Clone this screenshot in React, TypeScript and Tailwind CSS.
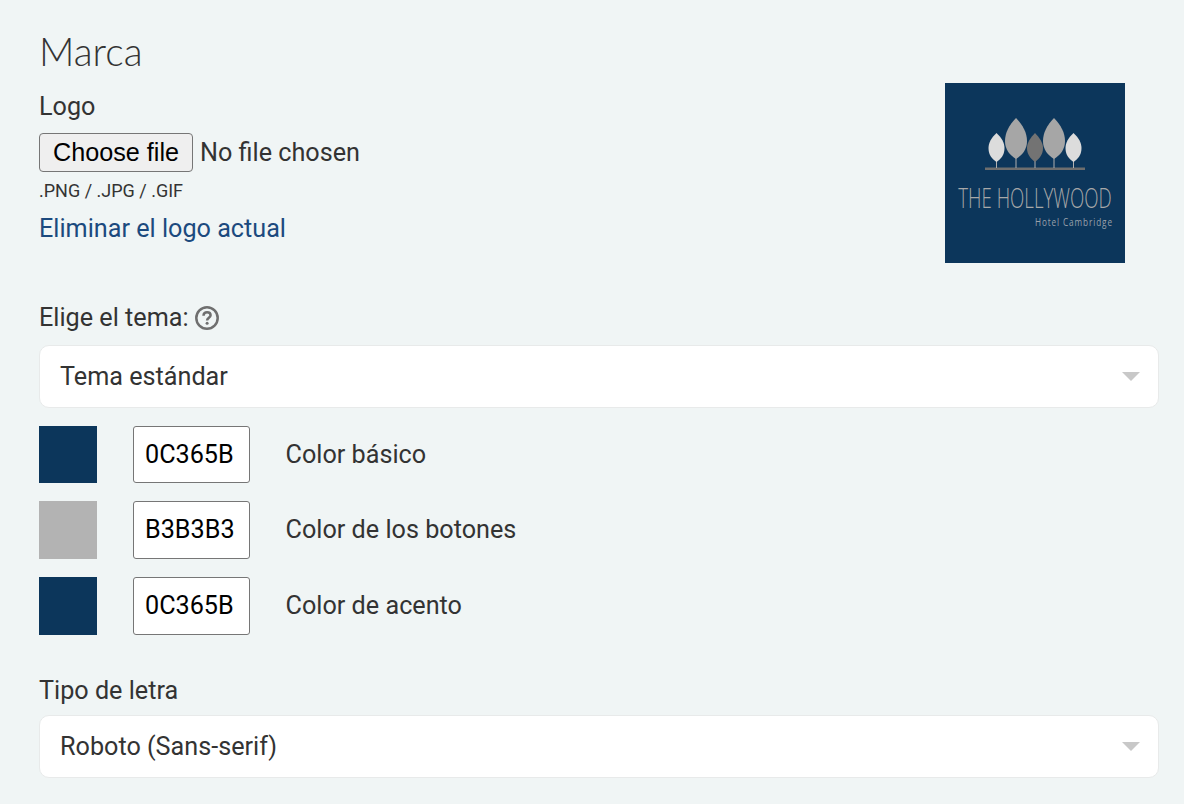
const roboto = "font-['Roboto',sans-serif]";

function LogoImage() {
  return (
    <svg width="180" height="180" viewBox="0 0 180 180" className="block shrink-0">
      <rect width="180" height="180" fill="#0c365b" />
      <rect x="40" y="84.5" width="100" height="2.5" fill="#6e6e6e" />
      <g stroke="#b0b0b0" strokeWidth="1">
        <line x1="51.5" y1="70" x2="51.5" y2="85" />
        <line x1="71" y1="70" x2="71" y2="85" />
        <line x1="90" y1="70" x2="90" y2="85" />
        <line x1="109" y1="70" x2="109" y2="85" />
        <line x1="128.5" y1="70" x2="128.5" y2="85" />
      </g>
      <path d="M51.5 50 C46 55 43.5 60 43.5 65 C43.5 72 47 76 51.5 79 C56 76 59.5 72 59.5 65 C59.5 60 57 55 51.5 50 Z" fill="#dcdcdc" />
      <path d="M71 35 C64 42 60 50 60 58 C60 67 65 72 71 76 C77 72 82 67 82 58 C82 50 78 42 71 35 Z" fill="#a6a6a6" />
      <path d="M90 50 C85 55 82 60 82 65 C82 71 85 75 90 79 C95 75 98 71 98 65 C98 60 95 55 90 50 Z" fill="#737373" />
      <path d="M109 35 C102 42 98 50 98 58 C98 67 103 72 109 76 C115 72 120 67 120 58 C120 50 116 42 109 35 Z" fill="#a6a6a6" />
      <path d="M128.5 50 C123 55 120.5 60 120.5 65 C120.5 72 124 76 128.5 79 C133 76 136.5 72 136.5 65 C136.5 60 134 55 128.5 50 Z" fill="#dcdcdc" />
      <text transform="scale(1 1.39)" x="13.3" y="89.6" fill="#a8a8a8" fontFamily="'Open Sans', sans-serif" fontWeight="300" fontSize="19.5" textLength="153.4" lengthAdjust="spacingAndGlyphs">THE HOLLYWOOD</text>
      <text transform="scale(1 1.3)" x="90" y="110" fill="#9aa1ab" fontFamily="'Open Sans', sans-serif" fontWeight="400" fontSize="8.2" textLength="77" lengthAdjust="spacing">Hotel Cambridge</text>
    </svg>
  );
}

function HelpIcon() {
  return (
    <svg width="24" height="24" viewBox="0 0 24 24" className="block" fill="none">
      <circle cx="12" cy="12" r="10.7" stroke="#6f6f6f" strokeWidth="2.5" />
      <path d="M8.5 9.7 C8.6 7.5 10.1 6.3 12.1 6.3 C14.2 6.3 15.6 7.6 15.6 9.3 C15.6 11.6 12.1 11.9 12.1 14.4" stroke="#6f6f6f" strokeWidth="2.5" />
      <circle cx="12.1" cy="17.3" r="1.5" fill="#6f6f6f" />
    </svg>
  );
}

function Select({ value }: { value: string }) {
  return (
    <div className="flex h-[63px] w-[1120px] items-center justify-between rounded-[10px] border border-[#e8eaea] bg-white pl-[20px] pr-[18px]">
      <span className="text-[25.2px] leading-none text-[#333333]">{value}</span>
      <span className="h-0 w-0 border-x-[9px] border-t-[9px] border-x-transparent border-t-[#c8c8c8]" />
    </div>
  );
}

function ColorRow({ hex, label, swatch }: { hex: string; label: string; swatch: string }) {
  return (
    <div className="mt-[18px] flex items-center">
      <div className={`h-[57.6px] w-[58px] ${swatch}`} />
      <div className="ml-[36px] flex h-[57.6px] w-[117px] items-center rounded-[3px] border border-[#767676] bg-white pl-[11px] text-[25.2px] text-black">
        {hex}
      </div>
      <span className="ml-[35.6px] text-[25.2px] text-[#333333]">{label}</span>
    </div>
  );
}

export default function App() {
  return (
    <div className={`${roboto} h-[804px] w-[1184px] overflow-hidden bg-[#f0f5f5] pl-[39px]`}>
      <h1 className="pt-[26px] font-['Lato',sans-serif] text-[39px] font-light leading-[50px] text-[#333333]">Marca</h1>
      <div className="flex w-[1120px] items-start justify-between">
        <div>
          <div className="mt-[17px] text-[25.2px] leading-[28px] text-[#333333]">Logo</div>
          <div className="mt-[12px] flex items-center">
            <button className="h-[39px] w-[154px] rounded-[4px] border border-[#767676] bg-[#efefef] font-['Liberation_Sans',sans-serif] text-[25.2px] leading-none text-black">
              Choose file
            </button>
            <span className="ml-[7px] text-[25.2px] text-[#333333]">No file chosen</span>
          </div>
          <div className="mt-[8px] text-[18px] leading-[22px] text-[#333333]">.PNG / .JPG / .GIF</div>
          <a className="mt-[13px] block text-[25.2px] leading-[28px] text-[#1c4a7e]">Eliminar el logo actual</a>
        </div>
        <div className="mr-[34px] mt-[7px]">
          <LogoImage />
        </div>
      </div>
      <div className="mt-[41px] flex items-center gap-[6px]">
        <span className="text-[25.2px] leading-[28px] text-[#333333]">Elige el tema:</span>
        <HelpIcon />
      </div>
      <div className="mt-[12.8px]">
        <Select value="Tema estándar" />
      </div>
      <ColorRow hex="0C365B" label="Color básico" swatch="bg-[#0c365b]" />
      <ColorRow hex="B3B3B3" label="Color de los botones" swatch="bg-[#b3b3b3]" />
      <ColorRow hex="0C365B" label="Color de acento" swatch="bg-[#0c365b]" />
      <div className="mt-[42.4px] text-[25.2px] leading-[28px] text-[#333333]">Tipo de letra</div>
      <div className="mt-[10px]">
        <Select value="Roboto (Sans-serif)" />
      </div>
    </div>
  );
}
